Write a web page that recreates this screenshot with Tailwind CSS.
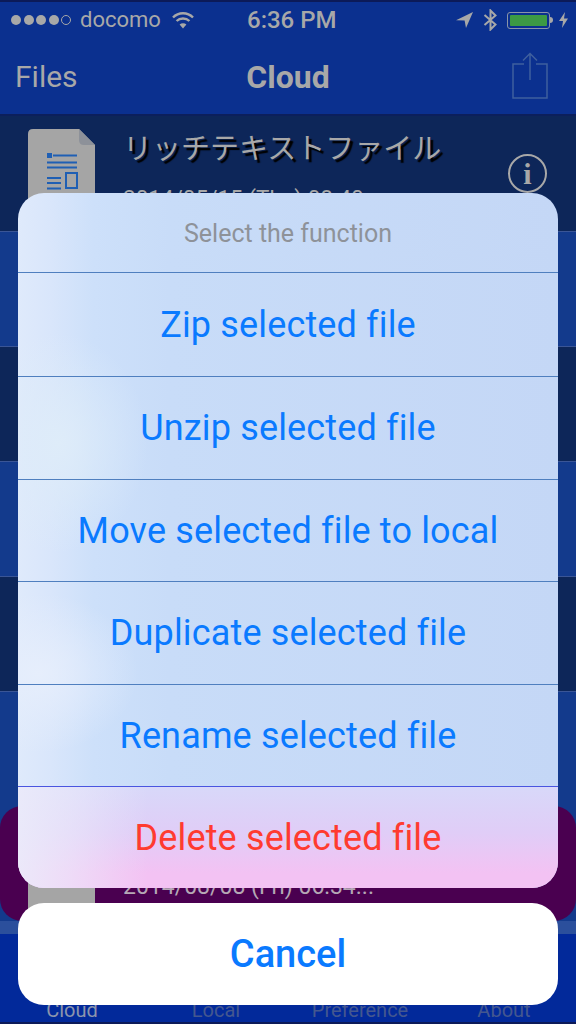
<!DOCTYPE html>
<html lang="en">
  <head>
    <meta charset="UTF-8" />
    <meta name="viewport" content="width=device-width, initial-scale=1.0" />
    <title>Cloud</title>
    <script src="https://cdn.jsdelivr.net/npm/@tailwindcss/browser@4"></script>
  </head>
  <body class="bg-[#0b2f8e]">
    <div class="relative w-[576px] h-[1024px] overflow-hidden font-['Roboto','Noto_Sans_CJK_JP',sans-serif]">
      <!-- status bar -->
      <div class="h-[40px] border-t-2 border-[#0c1a58] bg-[#0b308f] flex items-center pb-[2px] text-[#a8a8a8] relative">
        <div class="flex items-center gap-[2.5px] ml-[11px] w-[69px]">
          <span class="w-[10px] h-[10px] rounded-full bg-[#a8a8a8]"></span>
          <span class="w-[10px] h-[10px] rounded-full bg-[#a8a8a8]"></span>
          <span class="w-[10px] h-[10px] rounded-full bg-[#a8a8a8]"></span>
          <span class="w-[10px] h-[10px] rounded-full bg-[#a8a8a8]"></span>
          <span class="w-[10px] h-[10px] rounded-full border border-[#a8a8a8]"></span>
        </div>
        <span class="text-[22px] leading-none">docomo</span>
        <svg class="ml-[11px]" width="22" height="18" viewBox="0 0 22 18" fill="none" stroke="#a8a8a8" stroke-width="2.4">
          <path d="M1 6.5C6.5 0.8 15.5 0.8 21 6.5" />
          <path d="M4.6 10C8 6.6 14 6.6 17.4 10" />
          <path d="M11 17.5L7.6 13.5C9.5 11.8 12.5 11.8 14.4 13.5Z" fill="#a8a8a8" stroke="none" />
        </svg>
        <span class="absolute left-[247px] text-[24px] leading-none font-medium">6:36 PM</span>
        <div class="ml-auto flex items-center">
          <svg width="17" height="16" viewBox="0 0 17 16" fill="#a8a8a8"><path d="M17 0L0 8.2L8.6 8.4L10 16Z" /></svg>
          <svg class="ml-[10px]" width="15" height="22" viewBox="0 0 15 22" fill="none" stroke="#a8a8a8" stroke-width="2"><path d="M1.5 6L12.5 15.5L7.5 20.5V1.5L12.5 6.5L1.5 16" /></svg>
          <div class="ml-[9px] w-[43px] h-[17px] rounded-[3px] border border-[#8a94a8] p-[2px]"><div class="h-full rounded-[1px] bg-[#3c9a44]"></div></div>
          <span class="w-[3px] h-[6px] rounded-r-sm bg-[#a8a8a8]"></span>
          <svg class="ml-[6px] mr-[8px]" width="9" height="16" viewBox="0 0 9 16" fill="#a8a8a8"><path d="M6 0L0 9H4L3 16L9 6.5H5Z" /></svg>
        </div>
      </div>

      <!-- nav bar -->
      <div class="h-[76px] border-b-2 border-[#0c1f5c] bg-[#0b308f] flex items-center justify-between relative text-[#a8a8a8]">
        <span class="ml-[15px] text-[30px] leading-none">Files</span>
        <span class="absolute left-0 right-0 text-center text-[32px] leading-none font-bold">Cloud</span>
        <svg class="mr-[28px] mb-[3px]" width="36" height="47" viewBox="0 0 36 47" fill="none" stroke="#3f5f9e" stroke-width="1.5">
          <path d="M12 12H1V46H35V12H24" />
          <path d="M18 28V1.5M11 8.5L18 1.5L25 8.5" />
        </svg>
      </div>

      <!-- file list behind the sheet -->
      <div class="flex flex-col">
        <div class="h-[115px] bg-[#0d2659] flex relative">
          <svg class="ml-[28px] mt-[13px]" width="67" height="102" viewBox="0 0 67 102">
            <path d="M5 0H51L67 16V102H0V5Q0 0 5 0Z" fill="#a5a5a5" />
            <path d="M51 0V11Q51 16 56 16H67Z" fill="#8d9199" />
            <rect x="19" y="24" width="5" height="5" fill="#1f5fb4" />
            <path d="M19 33.5H49M19 38.5H49M19 49H33M19 54H33M19 59.5H33" stroke="#1f5fb4" stroke-width="2" />
            <path d="M25 26.5H49" stroke="#1f5fb4" stroke-width="2" />
            <rect x="38" y="44" width="11" height="15" fill="none" stroke="#1f5fb4" stroke-width="2" />
          </svg>
          <div class="ml-[28px] text-[#a8a8a8]">
            <p class="mt-[11px] text-[29px] leading-[44px] [text-shadow:3px_3px_1px_#000]">リッチテキストファイル</p>
            <p class="mt-[14px] text-[22.5px] leading-[26px]">2014/05/15 (Thu) 08:40</p>
          </div>
          <span class="absolute left-[508px] top-[38px] w-[39px] h-[39px] rounded-full border-2 border-[#a8a8a8] text-[#a8a8a8] flex items-center justify-center font-['Liberation_Serif',serif] font-bold text-[30px] leading-none">i</span>
        </div>
        <div class="h-[115px] bg-[#133a8c] border-t border-[#3a5596]"></div>
        <div class="h-[115px] bg-[#0d2659] border-t border-[#3a5596]"></div>
        <div class="h-[115px] bg-[#133a8c] border-t border-[#3a5596]"></div>
        <div class="h-[115px] bg-[#0d2659] border-t border-[#3a5596]"></div>
        <div class="h-[115px] bg-[#133a8c] border-t border-[#3a5596]"></div>
        <div class="h-[115px] bg-[#133a8c]">
          <div class="h-full rounded-[22px] bg-[#4a0050] flex">
            <div class="ml-[28px] w-[67px] bg-[#a5a5a5]"></div>
            <p class="ml-[28px] mt-[68px] text-[23px] leading-[26px] text-[#b5a8b5]">2014/08/08 (Fri) 06:34...</p>
          </div>
        </div>
        <div class="h-[13px] bg-[#2b4f9c]"></div>
      </div>

      <!-- tab bar -->
      <div class="absolute inset-x-0 bottom-0 h-[90px] bg-[#02299a] border-b-2 border-[#0c1a58] grid grid-cols-4 items-end text-center text-[20px] leading-[24px] text-[#44578f]">
        <span class="text-[#8b94ad]">Cloud</span>
        <span>Local</span>
        <span>Preference</span>
        <span>About</span>
      </div>

      <!-- action sheet -->
      <div class="absolute left-[18px] right-[18px] top-[193px] flex flex-col gap-[15px]">
        <div class="rounded-[26px] overflow-hidden flex flex-col text-center text-[36px] tracking-[0.15px] text-[#0a7aff] bg-[radial-gradient(ellipse_90px_110px_at_40px_250px,#deecf9_0%,#deecf900_100%),radial-gradient(ellipse_100px_80px_at_20px_480px,#e6eefc_0%,#e6eefc00_100%),linear-gradient(90deg,#dfeafb_0%,#d9e6fb_6%,#cde0fa_14%,#c8dcf8_28%,#c4d7f6_100%)]">
          <div class="h-[79px] flex items-center justify-center pt-[2px] text-[25px] tracking-normal text-[#8e9299]">Select the function</div>
          <div class="h-[104px] flex items-center justify-center border-t border-[#4f7fbf]">Zip selected file</div>
          <div class="h-[103px] flex items-center justify-center border-t border-[#4f7fbf]">Unzip selected file</div>
          <div class="h-[102px] flex items-center justify-center border-t border-[#4f7fbf]">Move selected file to local</div>
          <div class="h-[103px] flex items-center justify-center border-t border-[#4f7fbf]">Duplicate selected file</div>
          <div class="h-[102px] flex items-center justify-center border-t border-[#4f7fbf]">Rename selected file</div>
          <div class="h-[102px] flex items-center justify-center border-t border-[#4a55e0] text-[#ff3b30] bg-[linear-gradient(90deg,#ebebfaee_0%,#ebebfa99_10%,#ebebfa00_24%),linear-gradient(180deg,#d8d8f9_0%,#e0cdf7_45%,#f3c2f3_85%)]">Delete selected file</div>
        </div>
        <div class="h-[102px] rounded-[26px] bg-white flex items-center justify-center text-[38px] font-medium text-[#0a7aff]">Cancel</div>
      </div>
    </div>
  </body>
</html>
